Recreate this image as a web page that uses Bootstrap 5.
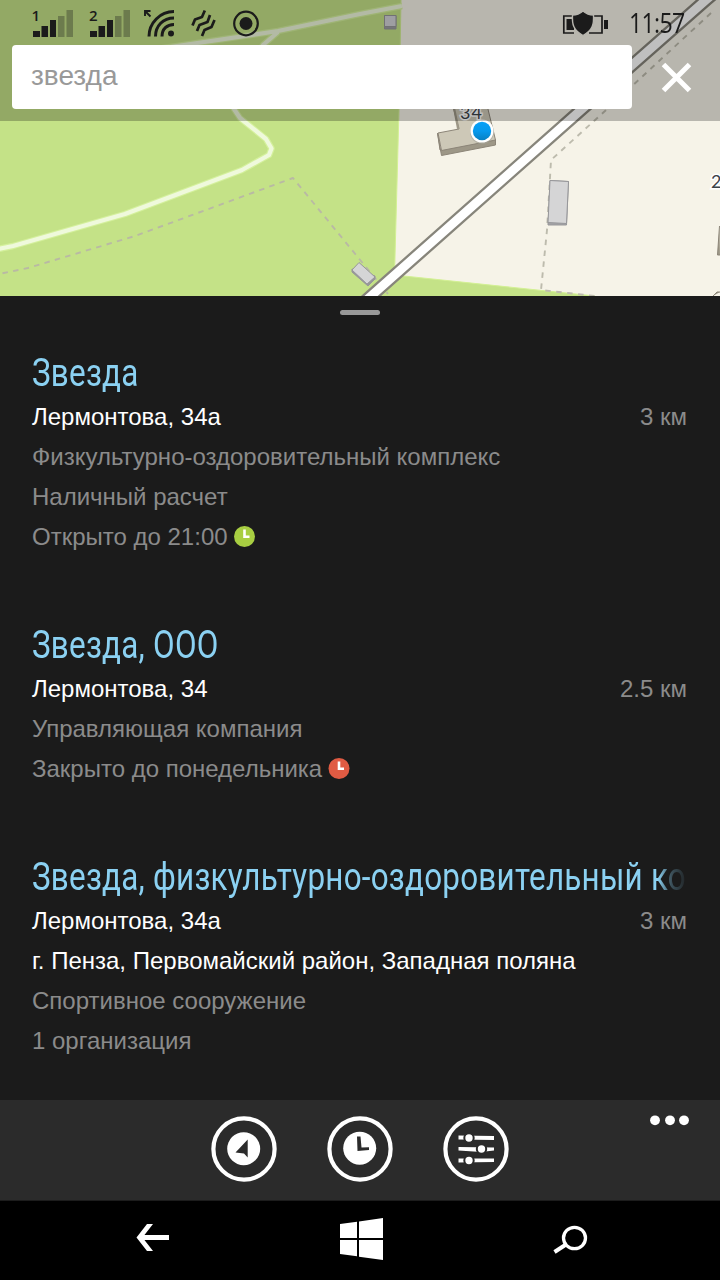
<!DOCTYPE html>
<html lang="ru">
<head>
<meta charset="utf-8">
<meta name="viewport" content="width=device-width, initial-scale=1">
<title>звезда</title>
<link href="https://cdn.jsdelivr.net/npm/bootstrap@5.3.0/dist/css/bootstrap.min.css" rel="stylesheet">
<style>
body{font-family:"Liberation Sans",Arial,sans-serif;background:#1b1b1b;color:#fff;font-size:24px;line-height:40px;width:720px;height:1280px;overflow:hidden}
svg{display:block;flex:none}
.map-area{height:296px}
.map-top{height:121px;background:rgba(0,0,0,.25)}
.status-line{height:45px;color:#1b1b1b}
.clock-text{font:26.5px/45px "Open Sans","Noto Sans",sans-serif;letter-spacing:-.8px;width:91px;transform-origin:0 50%;transform:scaleX(.875);padding-top:1px}
.search-box{width:620px;height:64px;border:0;border-radius:4px;padding:0 19px 3px;font-size:28px;line-height:61px;color:#999;background:#fff}
.close-icon{margin-left:24px}
.results{height:804px;background:#1b1b1b}
.grabber{width:40px;height:5px;border-radius:3px;background:#999;margin:14px auto 26px}
.result{padding:0 33px 0 32px}
.result-title{height:48px;line-height:48px;font-family:Roboto,sans-serif;font-weight:400;font-size:38.5px;letter-spacing:.3px;color:#8bd1f2;white-space:nowrap;overflow:hidden}
.result-title span{display:inline-block;transform-origin:0 50%;transform:scaleX(.815)}
.title-fade{-webkit-mask-image:linear-gradient(90deg,#000 626px,rgba(0,0,0,.3) 639px,rgba(0,0,0,.04) 655px);mask-image:linear-gradient(90deg,#000 626px,rgba(0,0,0,.3) 639px,rgba(0,0,0,.04) 655px)}
.dim{color:#8b8b8b}
.app-bar{height:100px;background:#2b2b2b}
.app-keys{gap:50px}
.nav-keys{height:80px;background:#000;border-top:1px solid #1c1c1c}
</style>
</head>
<body>
<div class="d-flex flex-column">
<header class="map-area position-relative overflow-hidden">
<svg width="720" height="296" viewBox="0 0 720 296">
<rect width="720" height="296" fill="#f6f3e8"/>
<path d="M0 0H401L399 110L394.500 275L404 276L547 291L595 296H0Z" fill="#c4e287"/>
<path d="M401 0L399 110L394.500 275M404 276L547 291L595 296" fill="none" stroke="#d3f094"/>
<g fill="none" stroke-linejoin="round">
<path d="M-4 249.500L13 246L125 214L242 170L269 155L271.500 148.500L266 139L240 118L230 103L263 45L278 32M150 50L278 31L360 14L402 6" stroke="#d4f09c" stroke-width="6.500"/>
<path d="M-4 249.500L13 246L125 214L242 170L269 155L271.500 148.500L266 139L240 118L230 103L263 45L278 32M150 50L278 31L360 14L402 6" stroke="#eff9dc" stroke-width="4.200"/>
<path d="M2.500 273.300L28 268L135 236L293 178L388 294" stroke="#b9b9a4" stroke-width="1.900" stroke-dasharray="5.500 5.300"/>
<path d="M711 13L605 111L551 160L547 230L541 290L595 296" stroke="#bdbbad" stroke-width="1.900" stroke-dasharray="5.500 5.500"/>
<path d="M351 314L371 296L581 110L706 0L720 -12" stroke="#87857b" stroke-width="13.400"/>
<path d="M351 314L371 296L581 110L706 0L720 -12" stroke="#fff" stroke-width="8.800"/>
</g>
<g stroke="#97979a" stroke-width="1">
<path d="M352 269L352 272L368 286L375 279L375 276Z" fill="#97979a"/>
<path d="M359 262.500L352 270L367 284L375 277Z" fill="#d5d5d6"/>
<path d="M550 180.500L568.500 181.500L566.500 225H548Z" fill="#a3a3a6"/>
<path d="M550 180.500L568.500 181.500L566.500 223.500L548 222.500Z" fill="#d5d5d6"/>
<path d="M384.500 15.500H396V29H384.500Z" fill="#9c9ca2"/><path d="M384.500 15.500H396V26.500H384.500Z" fill="#d3d3d8"/>
</g>
<path d="M437.500 133L441.500 155.500L495.500 145V140L440 150Z" fill="#9d9787" stroke="#8c8578"/>
<path d="M452 103L459 129L438 133L441.500 150.500L495.500 140L486 101Z" fill="#cdc8b7" stroke="#8c8578"/>
<path d="M452 103L457 129L459.500 128.500L454 103Z" fill="#9d9787"/>
<path d="M719.500 226L717.500 255H720M713 296L717 292H720" fill="#9d9787" stroke="#8c8578"/>
<g font-family="Lato" fill="#3b4249" stroke="#fff" stroke-width="3" paint-order="stroke"><text x="460" y="119" font-size="18" textLength="22">34</text><text x="711" y="188" font-size="18">2</text></g>
<circle cx="482" cy="132" r="12" fill="#aaa89c" opacity=".6"/>
<circle cx="482" cy="131" r="11.500" fill="#fff"/>
<defs><linearGradient id="pin" x2="0" y2="1"><stop stop-color="#08a0f7"/><stop offset=".5" stop-color="#0699ed"/><stop offset="1" stop-color="#0780c3"/></linearGradient></defs>
<circle cx="482" cy="131" r="9.200" fill="url(#pin)"/>
</svg>
<div class="map-top position-absolute top-0 start-0 w-100">
<div class="status-line d-flex">
<svg width="85" height="45" viewBox="0 0 85 45" fill="#1b1b1b"><text x="31.500" y="21" font-family="Open Sans" font-weight="600" font-size="15">1</text><path d="M33 31h7v6h-7zM41.500 26h6.500v11h-6.500zM50 20h6v17h-6z"/><path opacity=".32" d="M58 16h6.500v21H58zM66.500 10H73v27h-6.500z"/></svg>
<svg width="50" height="45" viewBox="85 0 50 45" fill="#1b1b1b"><text x="89" y="21" font-family="Open Sans" font-weight="600" font-size="15">2</text><path d="M90 31h7v6h-7zM98.500 26h6.500v11h-6.500zM107 20h6v17h-6z"/><path opacity=".32" d="M115 16h6.500v21H115zM123.500 10h6.500v27h-6.500z"/></svg>
<svg width="45" height="45" viewBox="135 0 45 45" fill="none" stroke="#1b1b1b" stroke-width="3"><path d="M149 36.500C149 23 160 11.500 174 11.500M155.500 36.500C155.500 26 163 18 174 18M162 36.500C162 29 167 24.500 174 24.500"/><circle cx="171" cy="33.500" r="3" fill="#1b1b1b" stroke="none"/><path d="M150.500 16.500L145 11M145 16v-5h5.500" stroke-width="1.900"/></svg>
<svg width="45" height="45" viewBox="180 0 45 45" fill="none" stroke="#1b1b1b" stroke-width="2.700" stroke-linejoin="round"><path d="M192.500 25.500L195 19.500L202 17L204.800 10.500M197 31L199.500 25L207.500 22L210 15M202 36L204.500 30L211.500 27L214.500 20"/></svg>
<svg width="45" height="45" viewBox="225 0 45 45"><circle cx="246" cy="23.500" r="11.800" fill="none" stroke="#1b1b1b" stroke-width="2.200"/><circle cx="246" cy="23.500" r="6.500" fill="#1b1b1b"/></svg>
<svg class="ms-auto" width="79" height="45" viewBox="550 0 79 45"><path d="M574 16H563.800V33H574M592 16H602V33H589" fill="none" stroke="#1b1b1b" stroke-width="1.700"/><path d="M566.500 19H574V30H566.500ZM604 20h4v9h-4z" fill="#1b1b1b"/><path d="M583 11C579 14.500 576 15 572.500 15C572 24 573 30 583 35.500C593 30 594 24 593.500 15C590 15 587 14.500 583 11Z" fill="#1b1b1b" stroke="#b8b6af" stroke-width="1.400"/></svg>
<div class="clock-text text-nowrap">11:57</div>
</div>
<div class="d-flex align-items-center ps-2 ms-1">
<div class="search-box">звезда</div>
<svg class="close-icon" width="60" height="64" viewBox="656 45 60 64"><path d="M663.500 64.500L689.500 90.500M689.500 64.500L663.500 90.500" stroke="#fff" stroke-width="5"/></svg>
</div>
</div>
</header>

<main class="results overflow-hidden">
<div class="grabber"></div>
<article class="result pt-2">
<div class="result-title"><span>Звезда</span></div>
<div class="d-flex justify-content-between"><span>Лермонтова, 34а</span><span class="dim">3 км</span></div>
<div class="dim">Физкультурно-оздоровительный комплекс</div>
<div class="dim">Наличный расчет</div>
<div class="dim d-flex align-items-center"><span>Открыто до 21:00</span><svg class="ms-1" width="26" height="22" viewBox="-1.500 0 26 22"><circle cx="11" cy="10.500" r="10.500" fill="#a8ce42"/><path d="M11 3.500V10.700H16" fill="none" stroke="#fff" stroke-width="2.600"/></svg></div>
</article>
<article class="result mt-5 pt-3">
<div class="result-title"><span>Звезда, ООО</span></div>
<div class="d-flex justify-content-between"><span>Лермонтова, 34</span><span class="dim">2.5 км</span></div>
<div class="dim">Управляющая компания</div>
<div class="dim d-flex align-items-center"><span>Закрыто до понедельника</span><svg class="ms-1" width="26" height="22" viewBox="-2 0 26 22"><circle cx="11" cy="10.500" r="10.500" fill="#e05b43"/><path d="M11 3.500V10.700H16" fill="none" stroke="#fff" stroke-width="2.600"/></svg></div>
</article>
<article class="result mt-5 pt-3">
<div class="result-title title-fade"><span>Звезда, физкультурно-оздоровительный ко</span></div>
<div class="d-flex justify-content-between"><span>Лермонтова, 34а</span><span class="dim">3 км</span></div>
<div>г. Пенза, Первомайский район, Западная поляна</div>
<div class="dim">Спортивное сооружение</div>
<div class="dim">1 организация</div>
</article>
</main>

<div class="app-bar position-relative d-flex justify-content-center align-items-center">
<div class="app-keys d-flex">
<svg width="66" height="98" viewBox="0 0 66 98"><circle cx="33" cy="48" r="30.600" fill="none" stroke="#fff" stroke-width="4.200"/><circle cx="32.700" cy="47.700" r="16.500" fill="#fff"/><path d="M36.700 38.500V56.500L33 52.500L24.500 51.500Z" fill="#2b2b2b"/></svg>
<svg width="66" height="98" viewBox="0 0 66 98"><circle cx="33" cy="48" r="30.600" fill="none" stroke="#fff" stroke-width="4.200"/><circle cx="32.700" cy="47.200" r="16.500" fill="#fff"/><path d="M30 35.500H33.500L34.500 46.500L42 46.200V49L30.500 50Z" fill="#2b2b2b"/></svg>
<svg width="66" height="98" viewBox="0 0 66 98"><circle cx="33" cy="48" r="30.600" fill="none" stroke="#fff" stroke-width="4.200"/><g fill="#fff"><path d="M15.500 34.500L51 35V39L15.500 38.500ZM15.500 46L51 46.500V49.500L38 51L15.500 49.500ZM15.500 57.500L51 57.500V61L15.500 61.500Z"/><g stroke="#2b2b2b" stroke-width="2"><circle cx="26" cy="37" r="4.700"/><circle cx="38.500" cy="48" r="4.700"/><circle cx="26" cy="59.500" r="4.700"/></g></g></svg>
</div>
<svg class="position-absolute top-0 end-0" width="80" height="40" viewBox="640 0 80 40" fill="#fff"><circle cx="655" cy="20.300" r="4.900"/><circle cx="670" cy="20.300" r="4.900"/><circle cx="684" cy="20.300" r="4.900"/></svg>
</div>
<nav class="nav-keys row g-0">
<div class="col-4"><svg width="240" height="79" viewBox="0 1 240 79"><path d="M169 37.500H141" stroke="#fff" stroke-width="5"/><path d="M147 24H153L142.500 37.500L153 51H147L136.500 37.500Z" fill="#fff"/></svg></div>
<div class="col-4"><svg width="240" height="79" viewBox="240 1 240 79" fill="#fff"><path d="M340 24L357 21.800V38H340ZM359 21.500L383 18V38H359ZM340 40H357V56.300L340 54ZM359 40H383V60L359 56.800Z"/></svg></div>
<div class="col-4"><svg width="240" height="79" viewBox="480 1 240 79" fill="none" stroke="#fff"><ellipse cx="574.500" cy="38" rx="11" ry="10.700" stroke-width="3.300"/><path d="M566 44.500L554.500 52" stroke-width="4"/></svg></div>
</nav>
</div>
<script src="https://cdn.jsdelivr.net/npm/bootstrap@5.3.0/dist/js/bootstrap.bundle.min.js"></script>
</body>
</html>
